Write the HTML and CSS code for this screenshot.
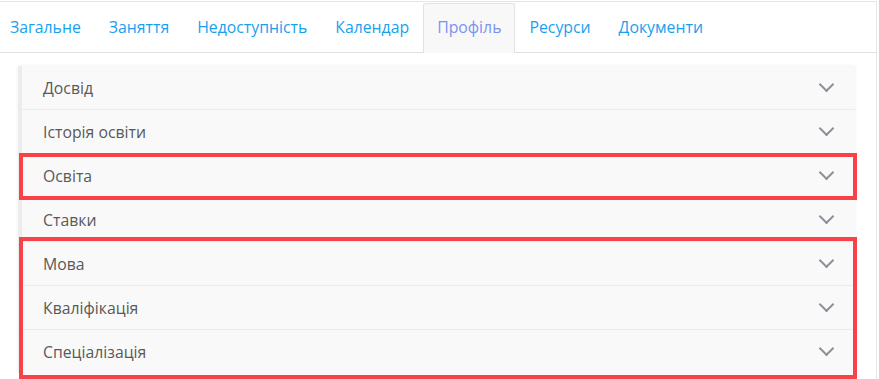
FILE: index.html
```html
<!DOCTYPE html>
<html lang="uk">
<head>
    <meta charset="UTF-8">
    <meta name="viewport" content="width=device-width, initial-scale=1.0">
    <title>Профіль</title>
    <link rel="stylesheet" href="styles.css">
</head>
<body>
    <div class="page">
        <ul class="tabs">
            <li class="tab first">Загальне</li>
            <li class="tab">Заняття</li>
            <li class="tab">Недоступність</li>
            <li class="tab">Календар</li>
            <li class="tab active">Профіль</li>
            <li class="tab">Ресурси</li>
            <li class="tab">Документи</li>
        </ul>
        <div class="content">
            <div class="panel">
                <div class="row">Досвід<span class="chevron"></span></div>
                <div class="row">Історія освіти<span class="chevron"></span></div>
                <div class="marked one">
                    <div class="row">Освіта<span class="chevron"></span></div>
                </div>
                <div class="row">Ставки<span class="chevron"></span></div>
                <div class="marked two">
                    <div class="row">Мова<span class="chevron"></span></div>
                    <div class="row">Кваліфікація<span class="chevron"></span></div>
                    <div class="row last">Спеціалізація<span class="chevron"></span></div>
                </div>
            </div>
        </div>
    </div>
</body>
</html>
```

FILE: styles.css
```css
body {
    font-family: 'Open Sans', sans-serif;
    margin: 0;
    padding: 0;
    background: white;
    overflow: hidden;
}
.page {
    width: 876px;
    height: 377px;
    margin-top: 1px;
    border-top: 1px solid #e6e6e6;
    border-right: 1px solid #e6e6e6;
}
.tabs {
    display: flex;
    margin: 0;
    padding: 0;
    list-style: none;
    height: 50px;
    border-bottom: 1px solid #e0e0e0;
}
.tab {
    padding: 0 13px;
    margin-top: 1px;
    height: 49px;
    line-height: 47px;
    font-size: 15.8px;
    color: #1a9ff0;
    border: 1px solid transparent;
    border-bottom: none;
}
.tab.first {
    padding-left: 9px;
}
.tab.active {
    background: #f8f8f8;
    color: #7b93f2;
    border-color: #e2e2e2;
    border-radius: 3px 3px 0 0;
}
.content {
    padding: 13px 21px 0 18px;
}
.panel {
    background: #f9f9f9;
    border-left: 4px solid #ececec;
    box-shadow: 0 0 3px rgba(0, 0, 0, 0.08);
}
.row {
    display: flex;
    justify-content: space-between;
    align-items: center;
    height: 43px;
    padding: 0 23px 0 21px;
    font-size: 15.8px;
    color: #595959;
    border-bottom: 1px solid #ececec;
}
.row.last {
    border-bottom: none;
}
.chevron {
    width: 9px;
    height: 9px;
    border-right: 2px solid #8c9099;
    border-bottom: 2px solid #8c9099;
    transform: rotate(45deg);
    margin-top: -6px;
}
.marked {
    position: relative;
}
.marked::after {
    content: "";
    position: absolute;
    left: -3px;
    right: -2px;
    border: 4px solid #f74347;
    pointer-events: none;
}
.marked.one::after {
    top: -1px;
    bottom: -2px;
}
.marked.two::after {
    top: -5px;
    bottom: -6px;
}
```
